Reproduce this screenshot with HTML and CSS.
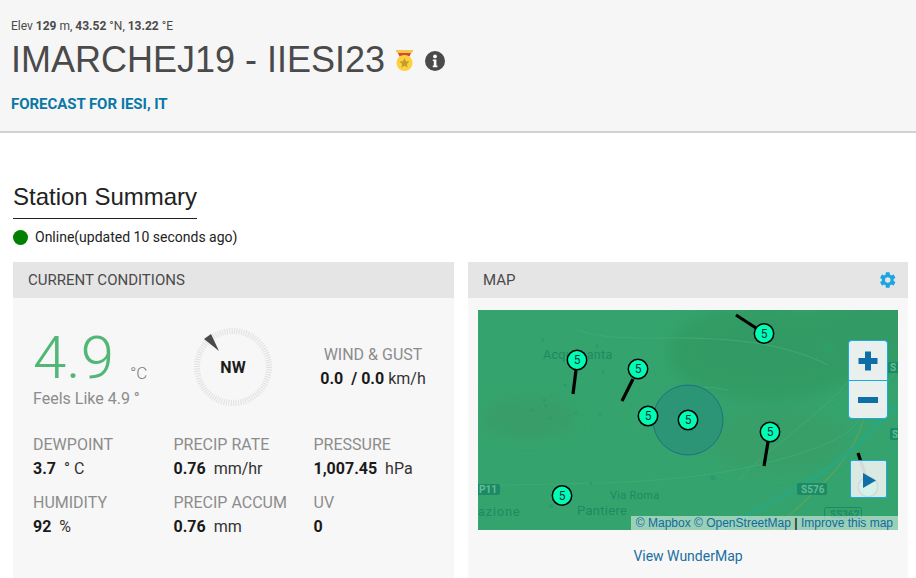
FILE: index.html
```html
<!DOCTYPE html>
<html lang="en">
<head>
<meta charset="utf-8">
<title>IMARCHEJ19 - IIESI23</title>
<link rel="stylesheet" href="styles.css">
</head>
<body>
<header class="top">
  <div class="elev">Elev <b>129</b> m, <b>43.52</b> °N, <b>13.22</b> °E</div>
  <div class="title-row">
    <h1>IMARCHEJ19 - IIESI23</h1>
    <svg class="medal" width="17" height="21" viewBox="0 0 17 21">
      <path d="M0 0h17v1.500l-2 2H2l-2-2z" fill="#f2c64f"/>
      <path d="M2 3h13l-1.500 3.500h-10z" fill="#d64a2c"/>
      <circle cx="8.500" cy="13" r="8" fill="#fbd13f"/>
      <path d="M8.500 8l1.500 3.200 3.500.4-2.600 2.400.7 3.400-3.100-1.700-3.100 1.700.7-3.400-2.600-2.400 3.500-.4z" fill="#c39b2c"/>
    </svg>
    <svg class="info" width="20" height="20" viewBox="0 0 20 20">
      <circle cx="10" cy="10" r="10" fill="#4a4a4a"/>
      <circle cx="10" cy="5.400" r="1.900" fill="#fff"/>
      <path d="M7.800 8.400h3.600v6.200h1v1.600H7.800v-1.600h1v-4.600h-1z" fill="#fff"/>
    </svg>
  </div>
  <a class="forecast" href="#">FORECAST FOR IESI, IT</a>
</header>

<main class="content">
  <h2 class="summary-title"><span>Station Summary</span></h2>
  <div class="status"><i class="dot"></i>Online(updated 10 seconds ago)</div>

  <div class="cards">
    <section class="card">
      <div class="card-head">CURRENT CONDITIONS</div>
      <div class="card-body cond">
        <div class="hero">
          <div class="temp-box">
            <div class="temp"><span class="temp-num">4.9</span><span class="temp-unit">°C</span></div>
            <div class="feels">Feels Like 4.9 °</div>
          </div>
          <div class="compass">
            <svg width="84" height="84" viewBox="0 0 84 84">
              <circle cx="42" cy="42" r="36" fill="none" stroke="#e2e2e2" stroke-width="6" stroke-dasharray="1.100 1.300"/>
              <path d="M13 14L20 9L28 26Z" fill="#4a4a4a"/>
            </svg>
            <span class="dir">NW</span>
          </div>
          <div class="wind">
            <div class="label">WIND &amp; GUST</div>
            <div class="value"><b>0.0 &nbsp;/ 0.0</b> km/h</div>
          </div>
        </div>
        <div class="metrics">
          <div><div class="label">DEWPOINT</div><div class="value"><b>3.7</b> &nbsp;° C</div></div>
          <div><div class="label">PRECIP RATE</div><div class="value"><b>0.76</b> &nbsp;mm/hr</div></div>
          <div><div class="label">PRESSURE</div><div class="value"><b>1,007.45</b> &nbsp;hPa</div></div>
          <div><div class="label">HUMIDITY</div><div class="value"><b>92</b> &nbsp;%</div></div>
          <div><div class="label">PRECIP ACCUM</div><div class="value"><b>0.76</b> &nbsp;mm</div></div>
          <div><div class="label">UV</div><div class="value"><b>0</b></div></div>
        </div>
      </div>
    </section>

    <section class="card">
      <div class="card-head map-head">MAP
        <svg class="gear" width="18" height="18" viewBox="0 0 24 24">
          <path fill="#1ba6e2" fill-rule="evenodd" d="M19.400 13c.05-.33.1-.66.1-1s-.05-.67-.1-1l2.200-1.700c.2-.15.25-.43.12-.66l-2.080-3.600c-.13-.23-.4-.3-.63-.23l-2.600 1.050c-.54-.4-1.120-.75-1.760-1l-.4-2.760A.5.500 0 0 0 13.750 1.700h-4.160a.5.500 0 0 0-.5.420l-.4 2.760c-.63.25-1.220.6-1.750 1L4.330 4.830c-.23-.1-.5 0-.63.22L1.620 8.640c-.13.230-.07.500.12.660L3.950 11c-.05.330-.1.670-.1 1s.05.670.1 1l-2.200 1.700c-.2.150-.25.430-.12.660l2.080 3.600c.13.230.4.300.63.230l2.600-1.050c.54.400 1.120.750 1.750 1l.4 2.760c.04.240.25.420.5.420h4.160c.25 0 .46-.18.500-.42l.4-2.760c.63-.25 1.220-.6 1.760-1l2.600 1.050c.23.100.5 0 .63-.23l2.080-3.600c.13-.23.070-.5-.12-.66zM11.670 15.700a3.700 3.700 0 1 1 0-7.400 3.700 3.700 0 0 1 0 7.400z"/>
        </svg>
      </div>
      <div class="card-body map-body">
        <div class="map">
          <svg class="map-art" width="420" height="220" viewBox="0 0 420 220">
            <defs>
              <filter id="soft"><feGaussianBlur stdDeviation="8"/></filter>
            </defs>
            <rect width="420" height="220" fill="#35a36d"/>
            <g filter="url(#soft)" fill="#339b65">
              <ellipse cx="290" cy="42" rx="100" ry="48"/>
              <ellipse cx="385" cy="25" rx="60" ry="45"/>
              <ellipse cx="50" cy="108" rx="48" ry="20" fill="#389d69"/>
              <ellipse cx="300" cy="130" rx="70" ry="32" fill="#379f69"/>
            </g>
            <g fill="none" stroke="#3eaa76" stroke-width="1">
              <path d="M0 176C90 172 200 178 300 150S370 110 420 60"/>
              <path d="M100 20C150 40 260 10 350 55"/>
              <path d="M260 170C300 130 340 110 400 40"/>
              <path d="M160 120C190 90 200 70 250 80"/>
            </g>
            <path d="M295 220C340 180 375 150 385 110" fill="none" stroke="#5aa35c" stroke-width="1.200"/>
            <path d="M240 220C270 205 300 190 340 165S390 120 420 95" fill="none" stroke="#27a884" stroke-width="2.500"/>
            <g fill="#2a9a70">
              <circle cx="65" cy="30" r="1.500"/><circle cx="119" cy="36" r="1.500"/><circle cx="125" cy="62" r="1.500"/>
              <circle cx="87" cy="75" r="1.500"/><circle cx="66" cy="90" r="1.500"/><circle cx="68" cy="96" r="1.500"/>
              <circle cx="98" cy="103" r="1.500"/><circle cx="122" cy="104" r="1.500"/><circle cx="72" cy="108" r="1.500"/>
              <circle cx="54" cy="100" r="1.500"/><circle cx="73" cy="196" r="2"/><circle cx="113" cy="173" r="1.500"/>
              <circle cx="235" cy="168" r="2.500"/><circle cx="341" cy="68" r="1.500"/>
            </g>
            <path d="M345 30l14 8-4 8-10-6z" fill="#2e9f6a"/>
            <circle cx="210" cy="110" r="35" fill="#2b9575" stroke="#1c7282" stroke-width="1"/>
            <g class="map-label">
              <text x="65" y="49">Acquasanta</text>
              <text x="132" y="189" class="small">Via Roma</text>
              <text x="99" y="205" class="place">Pantiere</text>
              <text x="0" y="206" class="wide">azione</text>
            </g>
            <g class="shield">
              <rect x="-4" y="174" width="26" height="11" rx="2"/><text x="1" y="183">P11</text>
              <rect x="319" y="173" width="30" height="12" rx="2"/><text x="323" y="183">S576</text>
              <rect x="410" y="52" width="14" height="11"/><text x="412" y="61">S</text>
              <rect x="412" y="118" width="14" height="12" rx="2"/><text x="414" y="128">S</text>
              <rect class="outline" x="346.500" y="197.500" width="37" height="13" rx="2"/><text class="dark" x="352" y="208">SS362</text>
            </g>
            <g class="stems">
              <path d="M258 5L278 18"/>
              <path d="M95 84L98 60"/>
              <path d="M144 91L155 69"/>
              <path d="M286 156L290 132"/>
              <path d="M380 143L388 167"/>
            </g>
            <g class="cross"><path d="M282 122H286M292 113V116M300 113V116"/></g>
            <g class="pin">
              <circle cx="286" cy="23.500" r="9.700"/><text x="286" y="27.500">5</text>
              <circle cx="99" cy="50" r="9.700"/><text x="99" y="54">5</text>
              <circle cx="160" cy="59" r="9.700"/><text x="160" y="63">5</text>
              <circle cx="170" cy="106" r="9.700"/><text x="170" y="110">5</text>
              <circle cx="210" cy="110" r="9.700"/><text x="210" y="114">5</text>
              <circle cx="292" cy="122" r="9.700"/><text x="292" y="126">5</text>
              <circle cx="84" cy="185.500" r="9.700"/><text x="84" y="189.500">5</text>
              <circle cx="390" cy="177" r="9.700"/>
            </g>
          </svg>
          <div class="zoom-ctl">
            <button class="ctl" aria-label="Zoom in"><svg width="22" height="22" viewBox="0 0 22 22"><path d="M8 1.500h6V8h6.500v6H14v6.500H8V14H1.500V8H8z" fill="#0f6ea8"/></svg></button>
            <button class="ctl" aria-label="Zoom out"><svg width="22" height="8" viewBox="0 0 22 8"><rect x="1" y="1" width="20" height="6" fill="#0f6ea8"/></svg></button>
          </div>
          <button class="play" aria-label="Play"><svg width="13" height="15" viewBox="0 0 14 16"><path d="M0 0L14 8L0 16Z" fill="#0f6ea8"/></svg></button>
          <div class="attrib"><a href="#">© Mapbox</a> <a href="#">© OpenStreetMap</a> <b>|</b> <a href="#">Improve this map</a></div>
        </div>
        <a class="view-map" href="#">View WunderMap</a>
      </div>
    </section>
  </div>
</main>
</body>
</html>
```
FILE: styles.css
```css
* { box-sizing: border-box; }
html, body { margin: 0; height: 578px; overflow: hidden; }
body { background: #fff; font-family: Roboto, "Liberation Sans", sans-serif; color: #222; }
a { text-decoration: none; }

.top { height: 133px; background: #f6f6f6; border-bottom: 2px solid #d2d2d2; padding: 19px 11px 0; }
.elev { font-size: 12px; line-height: 14px; color: #4a4a4a; }
.elev b { font-weight: 700; }
.title-row { display: flex; align-items: center; height: 42px; margin-top: 6px; }
h1 { margin: 0; font: 400 36px/42px "Liberation Sans", Arial, sans-serif; color: #4a4a4a; }
.medal { margin-left: 11px; }
.info { margin-left: 12px; margin-top: 1px; }
.forecast { display: block; margin-top: 14px; font-size: 15px; line-height: 18px; font-weight: 700; letter-spacing: -.05px; color: #0a77a6; }

.content { padding: 0 8px 0 13px; }
.summary-title { margin: 47px 0 0; font: 400 24px/34px "Liberation Sans", Arial, sans-serif; color: #222; }
.summary-title span { display: inline-block; border-bottom: 1px solid #222; height: 39px; }
.status { display: flex; align-items: center; gap: 7px; height: 16px; margin-top: 10px; font-size: 14px; color: #222; }
.dot { width: 15px; height: 15px; border-radius: 50%; background: #008000; }

.cards { display: grid; grid-template-columns: 441px 440px; gap: 14px; margin-top: 17px; }
.card-head { height: 36px; background: #e5e5e5; padding-left: 15px; font-size: 15px; line-height: 36px; color: #4a4a4a; }
.map-head { display: flex; justify-content: space-between; align-items: center; padding-right: 11px; }
.card-body { height: 280px; background: #f7f7f7; }

.cond { padding: 20px 20px 0; }
.hero { display: flex; height: 104px; }
.temp-box { width: 141px; padding-top: 10px; }
.temp { display: flex; align-items: flex-end; height: 60px; }
.temp-num { font-size: 60px; line-height: 60px; font-weight: 300; color: #52b776; }
.temp-unit { margin: 0 0 5px 16px; font-size: 17px; line-height: 20px; color: #7d7d7d; font-weight: 300; }
.feels { margin-top: 1px; font-size: 16px; line-height: 20px; color: #8c8c8c; }
.compass { position: relative; width: 84px; height: 84px; margin: 7px 0 0 17px; }
.compass svg { display: block; }
.dir { position: absolute; inset: 0; display: flex; align-items: center; justify-content: center; font-size: 16px; font-weight: 700; color: #1c1c1c; }
.wind { margin-left: 43px; width: 110px; padding-top: 27px; text-align: center; }
.label { font-size: 16px; line-height: 20px; color: #8c8c8c; white-space: nowrap; }
.value { margin-top: 3px; font-size: 16px; line-height: 22px; color: #333; white-space: nowrap; }
.value b { color: #1a1a1a; font-weight: 700; }
.metrics { display: grid; grid-template-columns: 140.500px 140px 100px; row-gap: 13px; margin-top: 13px; }

.map-body { padding: 12px 10px 0; text-align: center; }
.map { position: relative; width: 420px; height: 220px; overflow: hidden; }
.map-art { display: block; }
.map-label text { font: 400 12.500px Roboto, sans-serif; fill: #1f8a61; letter-spacing: .3px; }
.map-label .small { font-size: 11px; }
.map-label .place { font-size: 13px; }
.map-label .wide { font-size: 12.500px; letter-spacing: 1px; }
.shield rect { fill: #1d8a66; }
.shield rect.outline { fill: none; stroke: #1d8a66; stroke-width: 1; }
.shield text { font: 700 10px Roboto, sans-serif; fill: #63bd94; }
.shield text.dark { fill: #1d8a66; }
.stems path { stroke: #000; stroke-width: 3.200; fill: none; }
.cross path { stroke: #1a6a4a; stroke-width: 1; fill: none; }
.pin circle { fill: #00fdb4; stroke: #000; stroke-width: 1.500; }
.pin text { font: 400 12px Roboto, sans-serif; fill: #134; text-anchor: middle; }

.zoom-ctl { position: absolute; left: 370px; top: 30px; width: 40px; }
.ctl { display: flex; align-items: center; justify-content: center; width: 40px; height: 40px; padding: 0; background: #e8efec; border: 1px solid #1aa9e0; }
.ctl:first-child { border-radius: 4px 4px 0 0; border-bottom: 0; }
.ctl:last-child { height: 39px; border-radius: 0 0 4px 4px; }
.play { position: absolute; left: 372px; top: 150px; width: 37px; height: 38px; padding: 2px 0 0 1px; display: flex; align-items: center; justify-content: center; background: rgba(236, 241, 238, .9); border: 1px solid #1aa9e0; border-radius: 2px; }
.attrib { position: absolute; right: 0; bottom: 0; width: 267px; height: 14px; padding-right: 5px; background: rgba(255, 255, 255, .5); font: 12px/15px "Liberation Sans", Arial, sans-serif; text-align: right; color: #333; white-space: nowrap; }
.attrib a { color: #14699f; }
.view-map { display: block; margin-top: 18px; font-size: 14px; line-height: 17px; color: #1a6fa0; }
```
